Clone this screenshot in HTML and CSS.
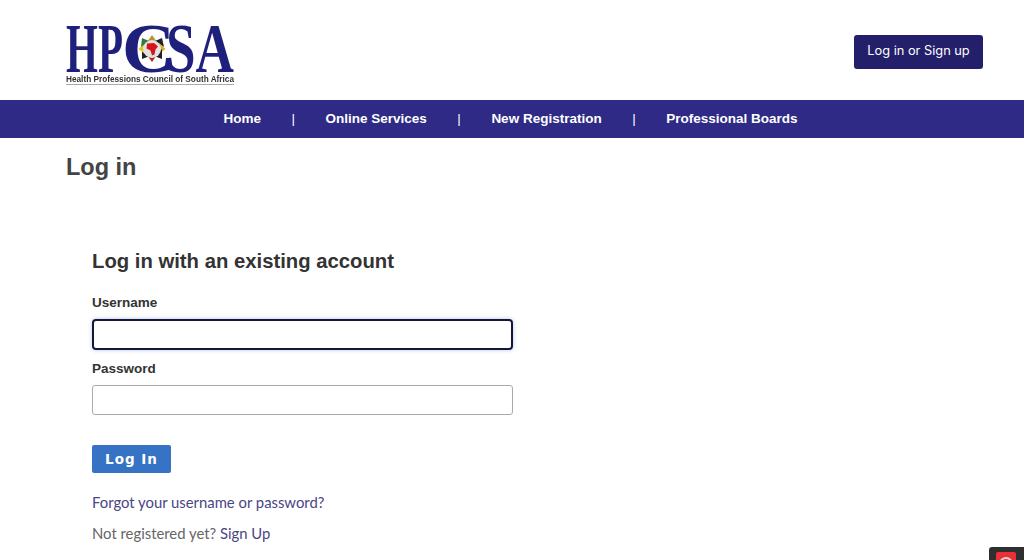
FILE: index.html
```html
<!DOCTYPE html>
<html lang="en">
<head>
<meta charset="utf-8">
<title>Log in</title>
<link rel="stylesheet" href="styles.css">
</head>
<body>
<header class="top">
  <a class="logo" href="#" aria-label="HPCSA">
    <svg width="170" height="80" viewBox="0 -18 170 80">
      <text class="logo-l" x="0" y="47" textLength="57" lengthAdjust="spacingAndGlyphs">HP</text>
      <text class="logo-l" x="56" y="47" textLength="53" lengthAdjust="spacingAndGlyphs">C</text>
      <text class="logo-l" x="100" y="47" textLength="68" lengthAdjust="spacingAndGlyphs">SA</text>
      <circle cx="86" cy="24" r="14" fill="#fff"/>
      <g>
        <polygon points="86,10 91,17 81,17" fill="#b8962c"/>
        <polygon points="96,13 98,22 89,16" fill="#222"/>
        <polygon points="99.5,24 93,29 93,18" fill="#d8b020"/>
        <polygon points="96,34 88,31 96,24" fill="#222"/>
        <polygon points="86,37 81,30 91,30" fill="#a83020"/>
        <polygon points="76,34 76,25 84,31" fill="#222"/>
        <polygon points="72.5,24 79,18 79,29" fill="#e0c820"/>
        <polygon points="76,13 83,16 75,22" fill="#2f7a3c"/>
      </g>
      <circle cx="86" cy="24" r="9" fill="#e2e2e2"/>
      <path d="M81 18.5 L88 18 L92 21.5 L89.5 24.5 L88.5 29.5 L86 30.5 L84.5 25.5 L80.5 23.5 Z" fill="#d8141c"/>
      <text class="logo-s" x="0" y="57" textLength="168" lengthAdjust="spacingAndGlyphs">Health Professions Council of South Africa</text>
      <line x1="0" y1="59.5" x2="168" y2="59.5" stroke="#aaa" stroke-width="1"/>
    </svg>
  </a>
  <a class="signin" href="#">Log in or Sign up</a>
</header>
<nav class="nav">
  <a href="#">Home</a><span class="sep">|</span>
  <a href="#">Online Services</a><span class="sep">|</span>
  <a href="#">New Registration</a><span class="sep">|</span>
  <a href="#">Professional Boards</a>
</nav>
<main class="page">
  <h1>Log in</h1>
  <section class="panel">
    <h2>Log in with an existing account</h2>
    <form class="form">
      <label class="label" for="user">Username</label>
      <input class="input focus" id="user" type="text">
      <label class="label second" for="pass">Password</label>
      <input class="input" id="pass" type="password">
      <button class="btn" type="button">Log In</button>
    </form>
    <p class="line first"><a href="#">Forgot your username or password?</a></p>
    <p class="line">Not registered yet? <a href="#">Sign Up</a></p>
  </section>
</main>
<div class="chat"><span class="chat-icon"><span class="chat-ring"></span></span></div>
</body>
</html>
```
FILE: styles.css
```css
* { box-sizing: border-box; }
html, body { margin: 0; height: 100%; }
body { background: #fff; font-family: "Liberation Sans", Arial, sans-serif; overflow: hidden; color: #333; }
a { text-decoration: none; }
.top { height: 100px; display: flex; justify-content: space-between; align-items: flex-start; padding: 7px 41px 0 66px; }
.logo { display: block; height: 80px; filter: blur(0.35px); }
.logo svg { display: block; }
.logo-l { font-family: "Liberation Serif", serif; font-weight: 700; font-size: 70px; fill: #1f1f7c; }
.logo-s { font-family: "Liberation Sans", sans-serif; font-weight: 700; font-size: 9.5px; fill: #333; }
.signin { margin-top: 28px; height: 34px; width: 129px; padding-bottom: 3px; display: flex; align-items: center; justify-content: center; background: #231f6b; color: #fff; border-radius: 3px; font: 12.8px Inter, sans-serif; }
.nav { height: 38px; padding-bottom: 1px; background: #2e2a86; display: flex; align-items: center; justify-content: center; gap: 30.5px; padding-right: 3px; color: #fff; font-weight: 700; font-size: 13.5px; }
.nav a { color: #fff; }
.sep { font-weight: 400; }
.page { padding: 0 66px; }
h1 { margin: 15px 0 0; font-size: 23.5px; line-height: 28px; font-weight: 700; color: #444; }
.panel { padding: 68px 0 0 26px; }
h2 { margin: 0; font-size: 20.3px; line-height: 24px; font-weight: 700; color: #333; }
.form { display: flex; flex-direction: column; align-items: flex-start; margin-top: 22px; }
.label { font-size: 13.5px; line-height: 16px; font-weight: 700; color: #333; }
.second { margin-top: 11px; }
.input { display: block; width: 421px; height: 30px; margin-top: 8px; border: 1px solid #aaa; border-radius: 3px; background: #fff; outline: none; }
.focus { height: 31px; border: 2px solid #16163a; border-radius: 4px; box-shadow: 0 0 4px #b9c6e8; }
.btn { margin-top: 30px; width: 79px; height: 28px; border: 0; border-radius: 2px; background: #3673c4; color: #fff; font: 700 13.5px "DejaVu Sans", sans-serif; letter-spacing: 1px; padding: 0; }
.line { margin: 13px 0 0; font: 14.85px/18px Lato, sans-serif; color: #666; }
.first { margin-top: 20px; }
.line a { color: #4a4585; }
.chat { position: absolute; right: 0; bottom: 0; width: 35px; height: 13px; background: #2f2f2f; border-radius: 3px 0 0 0; padding: 5px 0 0 7px; overflow: hidden; }
.chat-icon { display: block; width: 20px; height: 20px; background: #e8303a; border-radius: 2px; padding: 5px 0 0 3px; }
.chat-ring { display: block; width: 14px; height: 14px; border: 2px solid #f4d0d0; border-radius: 50%; }
```
